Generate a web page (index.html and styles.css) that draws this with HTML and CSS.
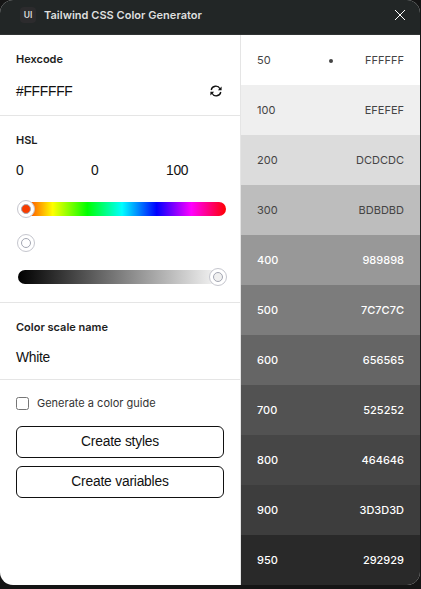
FILE: index.html
```html
<!DOCTYPE html>
<html lang="en">
<head>
<meta charset="utf-8">
<title>Tailwind CSS Color Generator</title>
<link rel="stylesheet" href="styles.css">
</head>
<body>
<div class="window">
  <header class="titlebar">
    <span class="logo">UI</span>
    <h1 class="title">Tailwind CSS Color Generator</h1>
    <svg class="close" width="12" height="12" viewBox="0 0 12 12"><path d="M1 1l10 10M11 1L1 11" stroke="#fff" stroke-width="1" fill="none"/></svg>
  </header>
  <main class="body">
    <section class="controls">
      <div class="group hex">
        <h2 class="label">Hexcode</h2>
        <div class="row"><span class="value">#FFFFFF</span>
          <svg class="refresh" width="12" height="12" viewBox="0 0 12 12" fill="none" stroke="#111" stroke-width="1.3"><path d="M1.2 5A4.7 4.7 0 0 1 10 3.8M10.8 7A4.7 4.7 0 0 1 2 8.2"/><path d="M11.6 1.4v3.8H7.8zM.4 10.6V6.8h3.8z" fill="#111" stroke="none"/></svg>
        </div>
      </div>
      <div class="group hsl">
        <h2 class="label">HSL</h2>
        <div class="numbers"><span class="value">0</span><span class="value">0</span><span class="value">100</span></div>
        <div class="slider hue"><i class="thumb"></i></div>
        <div class="slider saturation"><i class="thumb"></i></div>
        <div class="slider lightness"><i class="thumb"></i></div>
      </div>
      <div class="group name">
        <h2 class="label">Color scale name</h2>
        <span class="value">White</span>
      </div>
      <div class="actions">
        <label class="check"><span class="box"></span>Generate a color guide</label>
        <button class="button">Create styles</button>
        <button class="button">Create variables</button>
      </div>
    </section>
    <section class="scale">
      <div class="swatch s50"><span>50</span><i class="dot"></i><span>FFFFFF</span></div>
      <div class="swatch s100"><span>100</span><span>EFEFEF</span></div>
      <div class="swatch s200"><span>200</span><span>DCDCDC</span></div>
      <div class="swatch s300"><span>300</span><span>BDBDBD</span></div>
      <div class="swatch s400"><span>400</span><span>989898</span></div>
      <div class="swatch s500"><span>500</span><span>7C7C7C</span></div>
      <div class="swatch s600"><span>600</span><span>656565</span></div>
      <div class="swatch s700"><span>700</span><span>525252</span></div>
      <div class="swatch s800"><span>800</span><span>464646</span></div>
      <div class="swatch s900"><span>900</span><span>3D3D3D</span></div>
      <div class="swatch s950"><span>950</span><span>292929</span></div>
    </section>
  </main>
</div>
</body>
</html>
```
FILE: styles.css
```css
* { box-sizing: border-box; margin: 0; padding: 0; }
body { background: #151515; font-family: Inter, sans-serif; font-size: 11px; overflow: hidden; }
.window { width: 420px; height: 585px; border-radius: 13px; overflow: hidden; background: #fff; }
.titlebar { height: 35px; background: #222626; border-bottom: 1px solid #303333; display: flex; align-items: center; padding: 0 14px 4px 20px; }
.logo { width: 16px; height: 16px; border-radius: 4px; background: #2c2b2d; color: #ddd; font-size: 8.5px; font-weight: 600; line-height: 16px; text-align: center; }
.title { margin-left: 8px; color: #dedfdf; font-size: 11px; font-weight: 600; line-height: 16px; letter-spacing: 0.03px; }
.close { margin-left: auto; }
.body { display: flex; height: 550px; }
.controls { width: 241px; border-right: 1px solid #e5e5e5; }
.group { padding: 16px 16px 0; border-bottom: 1px solid #e5e5e5; }
.label { font-size: 11px; font-weight: 600; line-height: 16px; color: #1e1e1e; }
.value { font: 13.8px/18px "Liberation Sans", Arial, sans-serif; letter-spacing: -0.25px; color: #111; }
.hex { height: 81px; }
.row { display: flex; justify-content: space-between; align-items: center; height: 16px; margin-top: 16px; padding-right: 2px; }
.row .value { padding-top: 2px; }
.hsl { height: 187px; }
.numbers { display: grid; grid-template-columns: 75px 75px 1fr; height: 16px; margin-top: 14px; }
.slider { width: 208px; height: 14px; margin: 0 0 20px 2px; border-radius: 7px; display: flex; align-items: center; }
.hue { margin-top: 24px; background: linear-gradient(90deg, #f00, #ff0, #0f0, #0ff, #00f, #f0f, #f00); }
.lightness { background: linear-gradient(90deg, #000, #808080, #fff); justify-content: flex-end; }
.thumb { width: 18px; height: 18px; flex: none; border: 1px solid #c5c6ce; border-radius: 50%; background: #fff; display: grid; place-items: center; margin: 0 -1px; }
.thumb::after { content: ""; width: 8px; height: 8px; border: 1px solid #a4a7b3; border-radius: 50%; }
.hue .thumb::after { background: #f83c00; }
.lightness .thumb::after { background: #f0f0f0; }
.name { height: 77px; }
.name .value { display: block; margin-top: 14px; }
.actions { padding: 15px 16px 0; display: flex; flex-direction: column; gap: 8px; }
.check { display: flex; align-items: center; height: 16px; margin-bottom: 7px; color: #333; }
.box { width: 13px; height: 13px; border: 1px solid #767676; border-radius: 2.5px; margin-right: 8px; }
.button { width: 208px; height: 32px; border: 1px solid #111; border-radius: 6px; background: #fff; color: #111; font: 13.8px/16px "Liberation Sans", Arial, sans-serif; letter-spacing: -0.2px; }
.scale { width: 179px; }
.swatch { height: 50px; padding: 0 16px; display: flex; align-items: center; justify-content: space-between; color: #fff; font-weight: 500; }
.s50, .s100, .s200, .s300 { color: #444; font-weight: 400; }
.dot { width: 4px; height: 4px; margin: 1px 0 0 26px; border-radius: 50%; background: #444; }
.s50 { background: #fff; }
.s100 { background: #efefef; }
.s200 { background: #dcdcdc; }
.s300 { background: #bdbdbd; }
.s400 { background: #989898; }
.s500 { background: #7c7c7c; }
.s600 { background: #656565; }
.s700 { background: #525252; }
.s800 { background: #464646; }
.s900 { background: #3d3d3d; }
.s950 { background: #292929; }
```
